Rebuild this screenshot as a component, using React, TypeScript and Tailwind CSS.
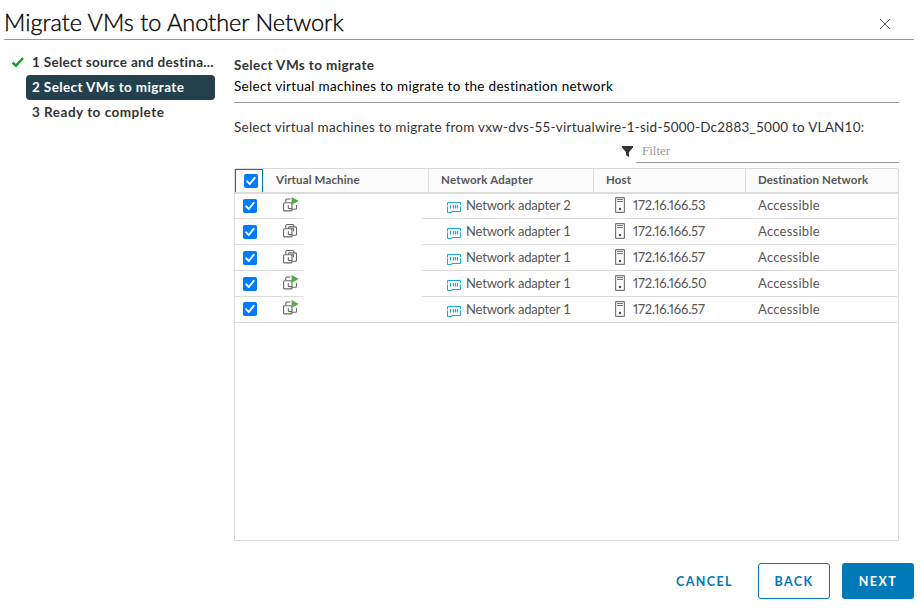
import React from "react";

type Row = { on: boolean; adapter: string; host: string };

const rows: Row[] = [
  { on: true, adapter: "Network adapter 2", host: "172.16.166.53" },
  { on: false, adapter: "Network adapter 1", host: "172.16.166.57" },
  { on: false, adapter: "Network adapter 1", host: "172.16.166.57" },
  { on: true, adapter: "Network adapter 1", host: "172.16.166.50" },
  { on: true, adapter: "Network adapter 1", host: "172.16.166.57" },
];

function Checkbox() {
  return (
    <svg width="14" height="14" viewBox="0 0 14 14" className="block shrink-0" role="img" aria-label="Selected">
      <rect width="14" height="14" rx="1.8" fill="#007aff" />
      <path d="M3.2 7.3 5.8 10 10.7 3.8" fill="none" stroke="#fff" strokeWidth="1.9" strokeLinecap="round" strokeLinejoin="round" />
    </svg>
  );
}

function VmIcon({ on }: { on: boolean }) {
  return (
    <svg width="16" height="16" viewBox="0 0 16 16" className="block shrink-0">
      <g fill="none" stroke="#666" strokeWidth="1.1">
        <path d={on ? "M2.8 5V3q0-1 1-1H7.5" : "M2.8 5V2.5q0-1 1-1h6q1 0 1 1v1.5"} />
        <rect x="0.6" y="5.8" width="8.4" height="8.1" rx="1" />
        <path d={on ? "M13.5 8v3.2q0 1-1 1H9" : "M5.3 5.5V4.9q0-1 1-1h6.2q1 0 1 1v6.3q0 1-1 1H9"} />
        <path d={on ? "M5.3 8.2v2.5q0 .9.9.9h2.7" : "M5.3 8.2v2.5q0 .9.9.9h2.7M8.2 5.8h2.4v2.4"} />
      </g>
      {on && <path d="M8.6 0 15.8 4 8.6 7.8Z" fill="#55a845" />}
    </svg>
  );
}

function AdapterIcon() {
  return (
    <svg width="14" height="11" viewBox="0 0 14 11" className="block shrink-0" fill="none" stroke="#1ba7dc">
      <path d="M0.5 3.5V.5h13V3M13.5 4.3V9.5H4.7v1H.5V4.5" strokeWidth="1" />
      <path d="M3.5 3v3.5M6.5 3v3.5M8.5 3v3.5M10.5 3v3.5" strokeWidth="1.2" />
    </svg>
  );
}

function HostIcon() {
  return (
    <svg width="10" height="16" viewBox="0 0 10 16" className="block shrink-0">
      <rect x="0.6" y="0.6" width="8.8" height="14.8" rx="0.5" fill="#fff" stroke="#777" strokeWidth="1.2" />
      <path d="M2 2.5h6M2 4.5h6" stroke="#777" strokeWidth="1" />
      <circle cx="5" cy="12" r="1.3" fill="#555" />
    </svg>
  );
}

function Header() {
  return (
    <div className="flex h-[25px] shrink-0 border-b-2 border-[#dcdcdc] bg-[#fafafa] text-[11.5px] font-bold leading-[22px] tracking-[0.14px] text-[#565656]">
      <div className="flex w-[28px] shrink-0 border border-b-0 border-[#0079a8] pl-[8px] pt-[4px]">
        <Checkbox />
      </div>
      <div className="w-[166px] shrink-0 border-r border-[#dcdcdc] pl-[13px]">Virtual Machine</div>
      <div className="w-[165px] shrink-0 border-r border-[#dcdcdc] pl-[12px] tracking-[0.2px]">Network Adapter</div>
      <div className="w-[152px] shrink-0 border-r border-[#dcdcdc] pl-[12px]">Host</div>
      <div className="pl-[12px]">Destination Network</div>
    </div>
  );
}

function VmRow({ row, last }: { row: Row; last: boolean }) {
  const line = "border-b border-[#dcdcdc]";
  return (
    <div className="flex h-[26px] shrink-0 text-[13px] leading-[25px] text-[#565656]">
      <div className={`flex w-[68px] shrink-0 pl-[8px] ${last ? "pt-[5px]" : "pt-[6px]"} ${line}`}>
        <Checkbox />
        <div className="-mt-[2px] ml-[26px]"><VmIcon on={row.on} /></div>
      </div>
      <div className={`w-[119px] shrink-0 ${last ? line : ""}`} />
      <div className={`flex w-[172px] shrink-0 pl-[25px] ${line}`}>
        <div className="pt-[9px]"><AdapterIcon /></div>
        <span className="ml-[5px] whitespace-nowrap tracking-[-0.18px]">{row.adapter}</span>
      </div>
      <div className={`flex w-[152px] shrink-0 pl-[21px] ${line}`}>
        <div className="pt-[4px]"><HostIcon /></div>
        <span className="ml-[8px] whitespace-nowrap proportional-nums tracking-[-0.15px]">{row.host}</span>
      </div>
      <div className={`mr-px flex-1 pl-[12px] tracking-[0.26px] ${line}`}>Accessible</div>
    </div>
  );
}

export default function App() {
  return (
    <div className="flex h-[608px] w-[920px] flex-col overflow-hidden bg-white font-['Lato',sans-serif] text-[#333]">
      <header className="ml-[4px] flex h-[40px] w-[910px] shrink-0 justify-between border-b border-[#999] text-black">
        <h1 className="whitespace-nowrap text-[23.5px] font-light leading-[44px] [-webkit-text-stroke:0.35px_#000]">Migrate VMs to Another Network</h1>
        <svg width="12" height="12" viewBox="0 0 12 12" className="mr-[23px] mt-[18px]" stroke="#666" strokeWidth="1">
          <path d="M1 1 11 11M11 1 1 11" />
        </svg>
      </header>
      <div className="flex h-[501px] shrink-0">
        <nav className="w-[234px] shrink-0 pt-[10px] text-[13.5px] font-bold leading-[25px] tracking-[0.38px]">
          <div className="flex h-[25px] whitespace-nowrap">
            <svg width="14" height="12" viewBox="0 0 14 12" className="ml-[11px] mr-[7px] mt-[6px]" fill="none" stroke="#12a52c" strokeWidth="2.5">
              <path d="M1.5 6.5 5 9.7 12 2" />
            </svg>
            <span className="tracking-[0.3px]">1 Select source and destina...</span>
          </div>
          <div className="ml-[26px] h-[25px] w-[189px] rounded-[4px] bg-[#25404d] pl-[6px] text-white">2 Select VMs to migrate</div>
          <div className="pl-[32px] tracking-[0.5px]">3 Ready to complete</div>
        </nav>
        <main className="flex w-[665px] flex-col">
          <div className="h-[63px] shrink-0 border-b border-[#999] pt-[15px] text-[13.5px] leading-[21px] tracking-[0.3px]">
            <div className="font-bold tracking-[0.38px]">Select VMs to migrate</div>
            <div className="text-black">Select virtual machines to migrate to the destination network</div>
          </div>
          <div className="h-[38px] shrink-0 whitespace-nowrap pt-[14px] text-[13.5px] leading-[20px] tracking-[0.24px]">
            Select virtual machines to migrate from vxw-dvs-55-virtualwire-1-sid-5000-Dc2883_5000 to VLAN10:
          </div>
          <div className="flex h-[22px] shrink-0 justify-end">
            <svg width="11" height="11" viewBox="0 0 11 11" className="mr-[3px] mt-[5px]" fill="#333">
              <path d="M0 0h11v1.5L7 6v5L4 9.3V6L0 1.5Z" />
            </svg>
            <div className="w-[263px] border-b border-[#999] pl-[6px] font-['Liberation_Serif',serif] text-[13px] leading-[20px] text-[#999]">Filter</div>
          </div>
          <div className="mt-[5px] flex h-[373px] shrink-0 flex-col rounded-t-[2px] border border-[#dcdcdc]">
            <Header />
            <div className="-mt-px flex flex-col">
              {rows.map((row, i) => <VmRow key={i} row={row} last={i === rows.length - 1} />)}
            </div>
          </div>
        </main>
      </div>
      <footer className="flex h-[58px] w-[914px] shrink-0 justify-end pt-[22px] text-[12.5px] font-bold leading-[36px] tracking-[1.4px] text-[#0079b8]">
        <button className="mr-[25px] h-[36px] pt-px">CANCEL</button>
        <button className="mr-[12px] flex h-[36px] w-[72px] items-center justify-center rounded-[3px] border border-[#0079b8] pt-px">BACK</button>
        <button className="flex h-[36px] w-[72px] items-center justify-center rounded-[3px] bg-[#0079b8] pt-px text-white">NEXT</button>
      </footer>
    </div>
  );
}
